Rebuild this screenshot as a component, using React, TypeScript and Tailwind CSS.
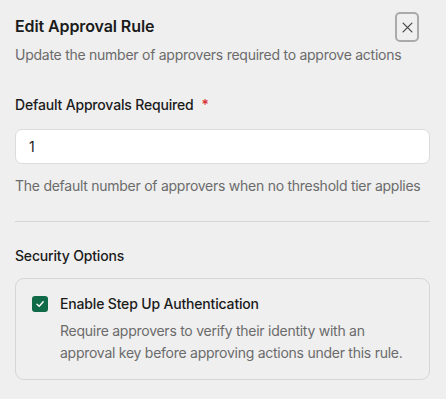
import React from "react";

export default function App() {
  return (
    <div className="w-[446px] h-[399px] bg-[#efefef] overflow-hidden" style={{ fontFamily: "Inter, 'Noto Sans', sans-serif" }}>
      <div className="px-[15px]">
        <div className="flex justify-between items-start">
          <div className="pt-[14px] text-[16px] leading-[24px] font-semibold text-[#1b1b1b] tracking-[-0.1px]">Edit Approval Rule</div>
          <button className="mt-[12px] mr-[12px] w-[24px] h-[30px] rounded-[5px] border-2 border-[#aaaaaa] flex items-center justify-center text-[#4a4a4a]">
            <svg width="11" height="11" viewBox="0 0 10 10" fill="none" stroke="currentColor" strokeWidth="1.2" strokeLinecap="round">
              <path d="M1 1 L9 9 M9 1 L1 9" />
            </svg>
          </button>
        </div>
        <div className="mt-[3px] text-[14px] leading-[20px] text-[#6b6b6b] tracking-[-0.26px] whitespace-nowrap">Update the number of approvers required to approve actions</div>

        <div className="mt-[30px] flex items-center text-[14px] leading-[20px] font-medium text-[#1b1b1b] tracking-[-0.17px]">
          Default Approvals Required<span className="ml-[8px] text-[#d92d2d]">*</span>
        </div>
        <div className="mt-[14px] h-[35px] w-[415px] bg-white border border-[#dcdcdc] rounded-[7px] flex items-center pl-[13px] text-[14px] text-[#1b1b1b]">1</div>
        <div className="mt-[12px] text-[14px] leading-[20px] text-[#6b6b6b] tracking-[-0.26px] whitespace-nowrap">The default number of approvers when no threshold tier applies</div>

        <div className="mt-[25px] h-px w-[415px] bg-[#d6d6d9]" />

        <div className="mt-[24px] text-[14px] leading-[20px] font-medium text-[#1b1b1b] tracking-[-0.17px]">Security Options</div>
        <div className="mt-[12px] w-[415px] border border-[#d6d6d9] rounded-[9px] pl-[16px] pr-[10px] pt-[15px] pb-[15px] flex gap-[12px]">
          <div className="mt-[2px] w-[16px] h-[16px] rounded-[3px] bg-[#0f6b47] flex items-center justify-center shrink-0">
            <svg width="10" height="10" viewBox="0 0 10 10" fill="none" stroke="white" strokeWidth="1.4" strokeLinecap="round" strokeLinejoin="round">
              <path d="M2 5.2 L4.2 7.3 L8.2 2.8" />
            </svg>
          </div>
          <div>
            <div className="text-[14px] leading-[20px] font-medium text-[#1b1b1b] tracking-[-0.17px]">Enable Step Up Authentication</div>
            <div className="mt-[6px] text-[14px] leading-[22px] text-[#6b6b6b] tracking-[-0.26px] whitespace-nowrap">
              Require approvers to verify their identity with an<br />approval key before approving actions under this rule.
            </div>
          </div>
        </div>
      </div>
    </div>
  );
}
